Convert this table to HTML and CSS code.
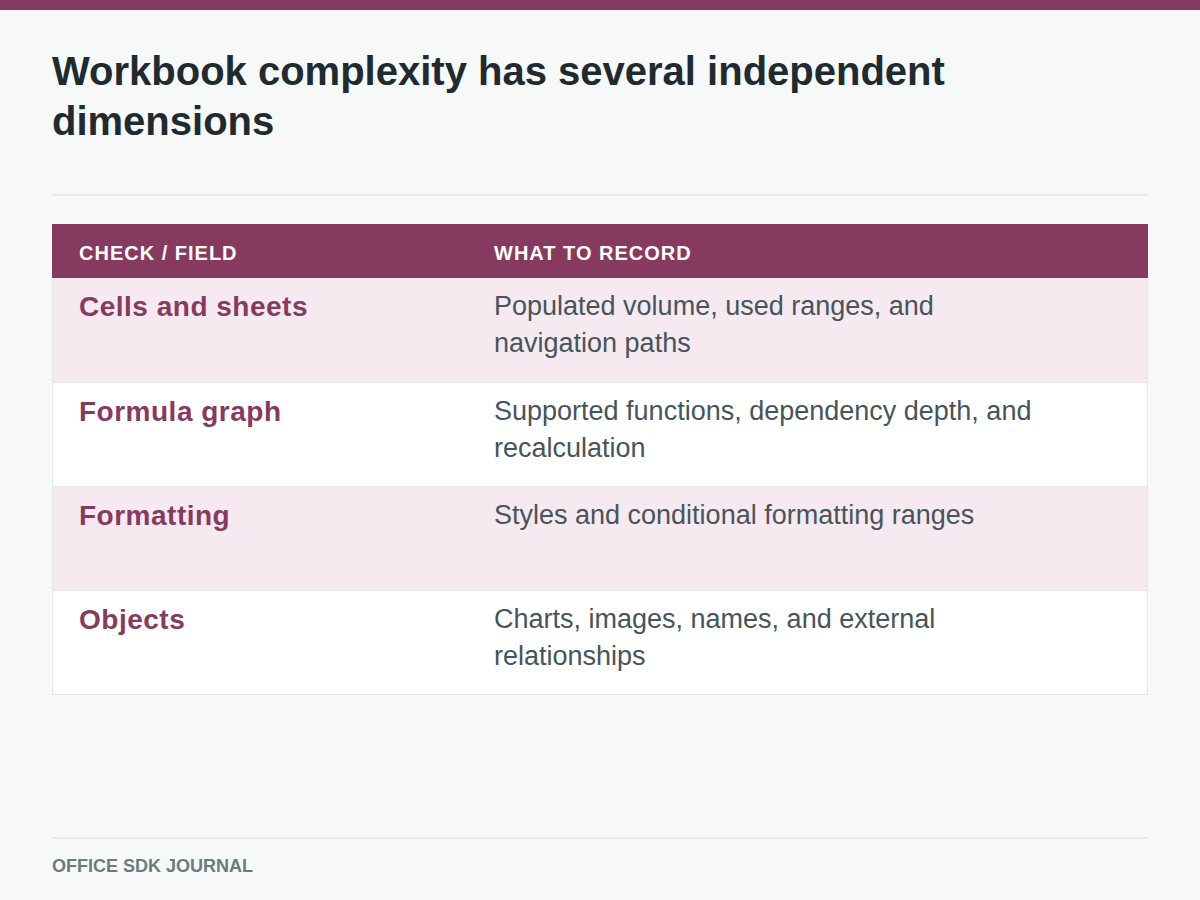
FILE: index.html
```html
<!DOCTYPE html>
<html lang="en">
<head>
<meta charset="utf-8">
<title>Workbook complexity</title>
<link rel="stylesheet" href="styles.css">
</head>
<body>
<div class="page">
  <div class="topbar"></div>
  <main class="content">
    <h1 class="title">Workbook complexity has several independent dimensions</h1>
    <hr class="rule">
    <div class="table">
      <div class="row head">
        <div class="cell">Check / Field</div>
        <div class="cell">What to record</div>
      </div>
      <div class="row tint">
        <div class="cell label">Cells and sheets</div>
        <div class="cell desc">Populated volume, used ranges, and navigation paths</div>
      </div>
      <div class="row">
        <div class="cell label">Formula graph</div>
        <div class="cell desc">Supported functions, dependency depth, and recalculation</div>
      </div>
      <div class="row tint">
        <div class="cell label">Formatting</div>
        <div class="cell desc">Styles and conditional formatting ranges</div>
      </div>
      <div class="row">
        <div class="cell label">Objects</div>
        <div class="cell desc">Charts, images, names, and external relationships</div>
      </div>
    </div>
  </main>
  <footer class="footer">Office SDK Journal</footer>
</div>
</body>
</html>
```
FILE: styles.css
```css
* { box-sizing: border-box; }
html, body { margin: 0; padding: 0; }
body {
  background: #f7f9f9;
  font-family: "Liberation Sans", Arial, sans-serif;
  color: #1f2a31;
}
.page {
  width: 1200px;
  height: 900px;
  display: flex;
  flex-direction: column;
}
.topbar {
  height: 10px;
  background: #873a60;
  flex: none;
}
.content {
  padding: 36px 52px 0;
}
.title {
  margin: 0;
  font-size: 40px;
  line-height: 50px;
  font-weight: 700;
  color: #1f2a31;
  max-width: 920px;
}
.rule {
  margin: 48px 0 28px;
  border: 0;
  height: 2px;
  background: #e6ebeb;
}
.table {
  border: 1px solid #e4e7e7;
  border-top: 0;
  background: #fff;
}
.row {
  display: grid;
  grid-template-columns: 415px 1fr;
  min-height: 104px;
  border-top: 1px solid #e4e7e7;
}
.row.head {
  min-height: 54px;
  background: #873a60;
  border-top: 0;
  margin: 0 -1px;
  padding: 0 1px;
  align-items: center;
}
.row.tint { background: #f6e9f0; }
.row.head + .row { border-top: 0; }
.cell {
  padding: 10px 25px 8px 26px;
}
.head .cell {
  padding: 3px 25px 0 26px;
  color: #fff;
  font-size: 20px;
  font-weight: 700;
  text-transform: uppercase;
  letter-spacing: 0.05em;
  line-height: 24px;
}
.label {
  font-size: 28px;
  line-height: 37px;
  font-weight: 700;
  color: #873a60;
  letter-spacing: 0.5px;
}
.desc {
  font-size: 27px;
  line-height: 37px;
  color: #46555b;
  max-width: 600px;
}
.footer {
  margin: auto 52px 0;
  border-top: 2px solid #e6ebeb;
  padding: 16px 0 23px;
  font-size: 18px;
  line-height: 22px;
  font-weight: 700;
  color: #6c7b80;
  text-transform: uppercase;
}
```
